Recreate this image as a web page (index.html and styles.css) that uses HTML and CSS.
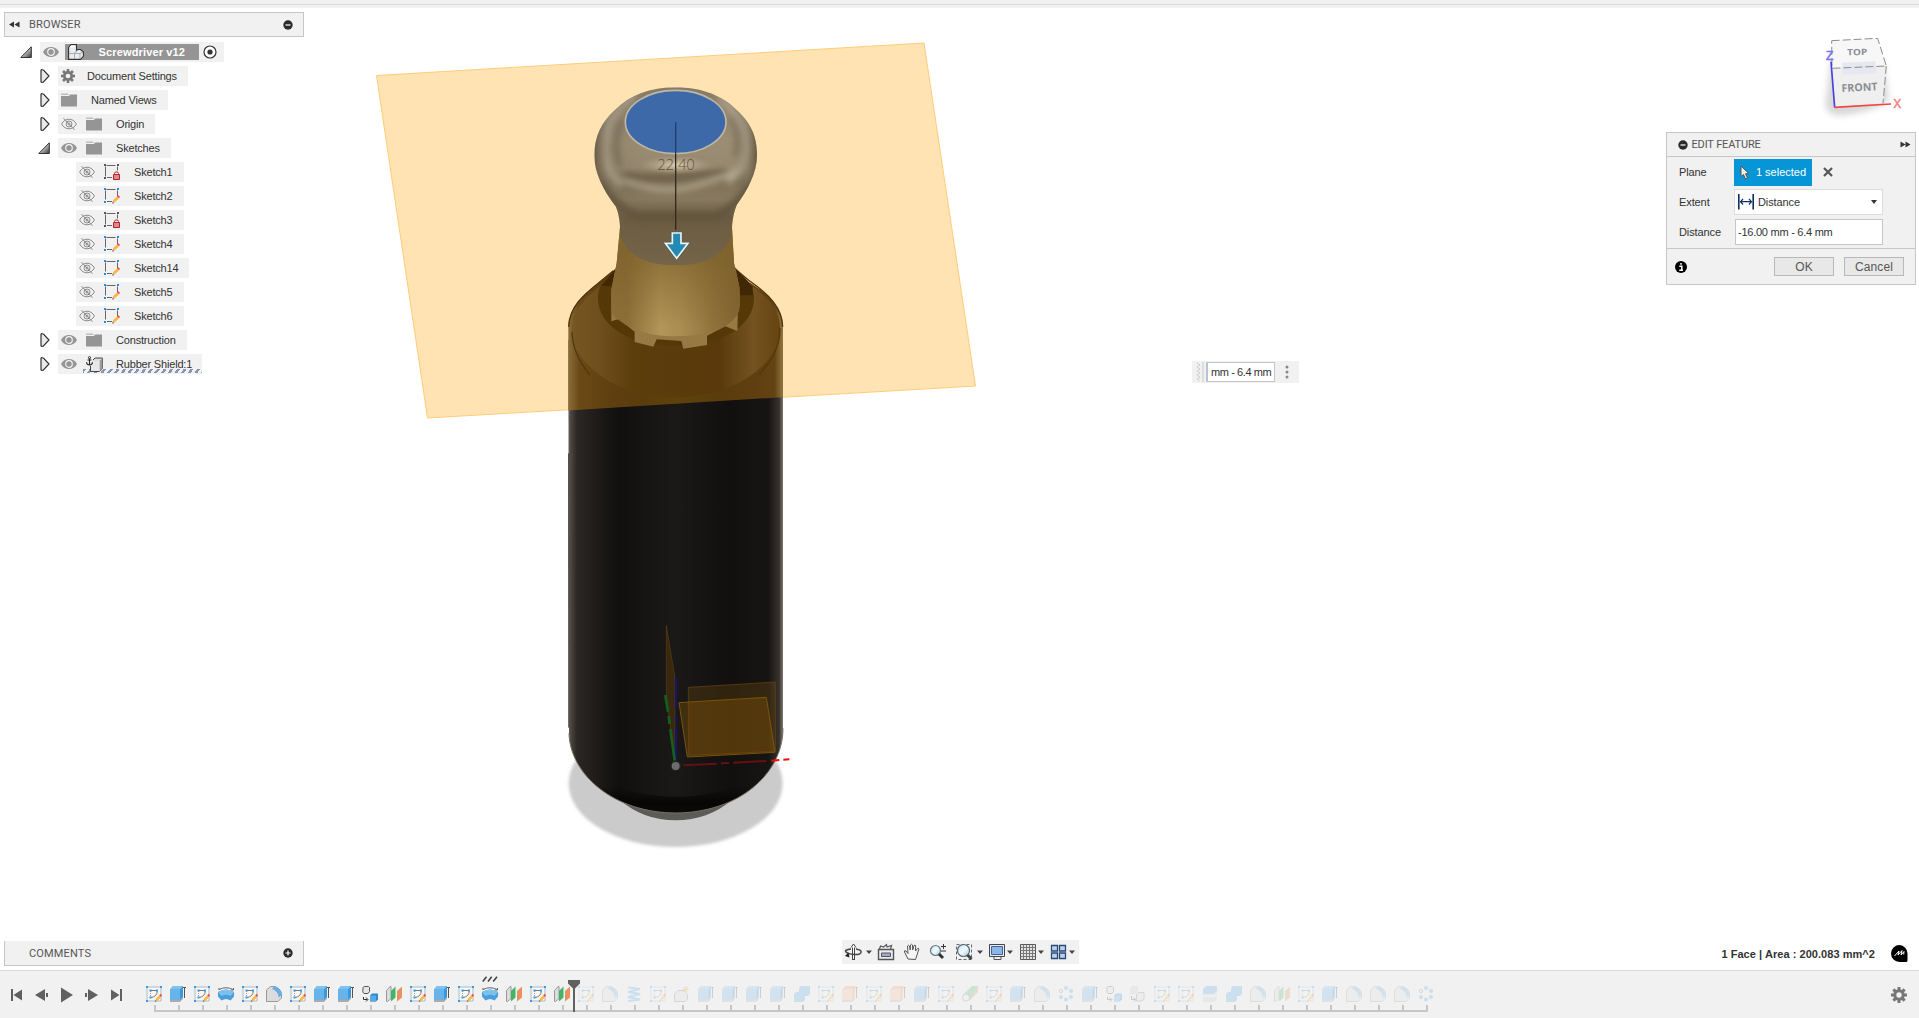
FILE: index.html
```html
<!DOCTYPE html>
<html lang="en">
<head>
<meta charset="utf-8">
<title>Screwdriver v12</title>
<link rel="stylesheet" href="styles.css">
</head>
<body>
<svg class="defs" aria-hidden="true">
  <defs>
    <linearGradient id="tri" x1="0" y1="0" x2="1" y2="1"><stop offset=".3" stop-color="#eee"/><stop offset="1" stop-color="#333"/></linearGradient>
    <linearGradient id="glass" x1="0" y1="0" x2="1" y2="1"><stop offset="0" stop-color="#b9dff0"/><stop offset=".5" stop-color="#f1fafc"/><stop offset="1" stop-color="#9fd0dc"/></linearGradient>
  </defs>
  <symbol id="open" viewBox="0 0 12 12"><path d="M11.3.8v10.700H.8z" fill="url(#tri)" stroke="#333"/></symbol>
  <symbol id="closed" viewBox="0 0 10 14"><path d="M1 1.200C1 .4 3 .6 3.500 1.200L9 7l-5.500 5.800C3 13.400 1 13.600 1 12.800z" fill="#e9e9e9" stroke="#222" stroke-width="1.100"/></symbol>
  <symbol id="eye" viewBox="0 0 16 12"><path d="M0 6C3-.6 13-.6 16 6 13 12.600 3 12.600 0 6z" fill="#959595"/><circle cx="8" cy="6" r="3.300" fill="none" stroke="#f1f1f1" stroke-width="1.200"/></symbol>
  <symbol id="noeye" viewBox="0 0 16 12"><g fill="none" stroke="#8b8b8b"><path d="M.6 6C4-.4 12-.4 15.400 6 12 12.400 4 12.400.6 6z"/><circle cx="8" cy="6" r="3"/><circle cx="8" cy="6" r="1"/><path d="M2.500.2l11 11.600"/></g></symbol>
  <symbol id="folder" viewBox="0 0 16 14"><path d="M0 .5h7l1 1.500H0z" fill="#bdbdbd"/><path d="M0 3h8l1-1.500h7V13.500H0z" fill="#959595"/></symbol>
  <symbol id="gear" viewBox="0 0 16 16"><g fill="#777"><path d="M6.500 0h3v16h-3z"/><path d="M6.500 0h3v16h-3z" transform="rotate(45 8 8)"/><path d="M6.500 0h3v16h-3z" transform="rotate(90 8 8)"/><path d="M6.500 0h3v16h-3z" transform="rotate(135 8 8)"/><circle cx="8" cy="8" r="5.800"/></g><circle cx="8" cy="8" r="2.700" fill="#f1f1f1"/></symbol>
  <symbol id="boxes" viewBox="0 0 16 16"><path d="M.6 3.500L3 .6h5.500v5.900L9.500 5.500h3l2.900 2.500v4.300L12.500 15.400H.6z" fill="#e9edf2" stroke="#333" stroke-width="1.100"/><path d="M.8 9.500h5.500L8.500 6.500M6.500 9.500V15M6.500 9.500H12V15M12 9.500L15 8" fill="none" stroke="#999" stroke-width=".8"/><path d="M3 1.500h4.500L5.800 3.300H1.500z" fill="#fff"/></symbol>
  <symbol id="sk" viewBox="0 0 16 16"><path d="M2.500 1.500h9M1.500 2.500v9M13.500 2.500v6M3 13.500h5" stroke="#666" fill="none"/><path d="M0 0h2v2H0zM13 0h2v2h-2zM0 13h2v2H0z" fill="#1a8fe8"/><path d="M8.700 14.500l.8-2.700 4.200-3.900 1.800 1.900-4 4z" fill="#fbb840"/><path d="M13 8.300l1-1L16 8.800l-1 1.300z" fill="#f33d4e"/><path d="M8 15.800l.8-2.300 1.700 1.500z" fill="#777"/></symbol>
  <symbol id="sklock" viewBox="0 0 16 16"><path d="M2.500 1.500h9M1.500 2.500v10M13.500 2.500v4M3 13.500h5" stroke="#666" fill="none"/><path d="M0 0h2v2H0zM13 0h2v2h-2zM0 13h2v2H0z" fill="#555"/><path d="M10.500 10.500V9.500q0-1.600 2-1.600T14.500 9.500v1" fill="none" stroke="#bd1f25"/><path d="M9.500 10.500h6v5h-6z" fill="#d98a8c" stroke="#bd1f25"/></symbol>
  <symbol id="anchor" viewBox="0 0 20 17"><path d="M7 4l2-2H16.500v10.500l-3 3H4.500V10" fill="#dcdcdc" stroke="#444"/><path d="M13.500 5l3-3v10.500l-3 3z" fill="#999"/><path d="M6.500 5h7v10H5V9z" fill="#e8e8e8"/><path d="M3.500 2.800V9M1.500 4h4M.5 6.200Q.8 9 3.500 9t3-2.800" fill="none" stroke="#222" stroke-width="1.100"/><circle cx="3.500" cy="1.700" r="1.100" fill="none" stroke="#222" stroke-width=".9"/></symbol>
  <symbol id="t-sk" viewBox="0 0 16 16"><path d="M1 1h14v14h-14z" fill="#fff" fill-opacity=".35" stroke="#a9bcc8"/><path d="M4 4.500h7M4.500 11.500Q11 11 11.300 5" fill="none" stroke="#777"/><path d="M4.500 5v6" stroke="#999" stroke-dasharray="1 1"/><path d="M0 0h2v2H0zM14 0h2v2h-2zM0 14h2v2H0zM3.500 3.500h2v2h-2zM10 3.500h2v2h-2zM3.500 10.500h2v2h-2z" fill="#369be6"/><path d="M9 15.400l.8-2.700 4-4 1.900 1.900-4 4z" fill="#fbb840"/><path d="M13.300 8.900l1.200-1.200L16 9.500l-1 1.300z" fill="#f33d4e"/><path d="M8.600 15.900l.8-2 1.500 1.400z" fill="#777"/></symbol>
  <symbol id="t-ex" viewBox="0 0 16 16"><path d="M0 13h10l3-3v2.800L10 16H0z" fill="#aaa"/><path d="M0 3.500L3 0H13v10.500L10 14H0z" fill="#3e98d6"/><path d="M0 3.500h10V14H0z" fill="#67b3ea"/><path d="M0 3.500L3 0H13L10 3.500z" fill="#7fc1f0"/><path d="M14.500 1v11M13 1.500h3" stroke="#555" fill="none"/></symbol>
  <symbol id="t-exo" viewBox="0 0 16 16"><path d="M0 13h10l3-3v2.800L10 16H0z" fill="#aaa"/><path d="M0 3.500L3 0H13v10.500L10 14H0z" fill="#f0a070"/><path d="M0 3.500h10V14H0z" fill="#ffbf94"/><path d="M14.500 1v11M13 1.500h3" stroke="#555" fill="none"/></symbol>
  <symbol id="t-rev" viewBox="0 0 16 16"><path d="M0 6q8-5 16 0v4.500L12.500 14.500q-4.500-3-9 0L0 10.500z" fill="#4a9fdc"/><path d="M0 6q8-5 16 0l-3.500 4q-4.500-3-9 0z" fill="#7cc2f1"/><path d="M1 3.500q7-3.500 14 0M1 4V2M13 4L15.500 4V2" fill="none" stroke="#666"/></symbol>
  <symbol id="t-fil" viewBox="0 0 16 16"><path d="M.5 4L4.500.5H9Q15.500 3 15.500 9v3l-3.500 3.500H.5z" fill="#dcdcdc" stroke="#999"/><path d="M6 3L8 .5Q15.500 1.500 15.800 9L12.500 11.500Q12.300 5 6 3z" fill="#62b0e4"/></symbol>
  <symbol id="t-comp" viewBox="0 0 16 16"><path d="M1 1.500L2.500.5h4l1 1v4l-1.500 2H2L.8 6z" fill="#e5e5e5" stroke="#555"/><path d="M1.500 11v2.500h4M4 11.500l2 2-2 2" fill="none" stroke="#333"/><path d="M8 9.500L10 7.500h6V13.500l-2 2H8z" fill="#2f8acd"/><path d="M8 9.500h6v6H8z" fill="#58a8e2"/></symbol>
  <symbol id="t-cp2" viewBox="0 0 16 16"><path d="M0 2L2 0h6v6L6 8H0z" fill="#ccc"/><path d="M1.500 10v3.500h4M4 11.500l2 2-2 2" fill="none" stroke="#333"/><path d="M6.500 8.500L8.500 6.500H14v6.500l-2 2H6.500z" fill="#ddd" stroke="#777"/></symbol>
  <symbol id="t-spl" viewBox="0 0 16 16"><path d="M.5 4.500L4 .5h1v12L1.500 15.500h-1z" fill="#ddd" stroke="#999"/><path d="M5 5l4.500-4.500V11.500L5 15.500z" fill="#43b56b"/><path d="M11 5l5-4.500V11.500l-5 4z" fill="#e5925f"/></symbol>
  <symbol id="t-coil" viewBox="0 0 16 16"><path d="M2 1.500L14 3 2 6l12 2L2 11l12 2.500L2 15" fill="none" stroke="#4aa3df" stroke-width="2"/></symbol>
  <symbol id="t-star" viewBox="0 0 16 16"><path d="M.5 8L4 4.500h6l3.500 4V13L11 15.500H.5z" fill="#ddd" stroke="#777"/><path d="M11.500 0v7M8 3.500h7M9 1l5 5M14 1L9 6" stroke="#efa72f"/></symbol>
  <symbol id="t-comb" viewBox="0 0 16 16"><path d="M0 8l2-2h3V2l2-2h9v8l-2 2h-3v4l-2 2H0z" fill="#4aa3df"/></symbol>
  <symbol id="t-pipe" viewBox="0 0 16 16"><path d="M7 15.500L16 6V0l-6 5z" fill="#e08a54"/><path d="M1 9L10 0h6L7 14z" fill="#43b56b"/><circle cx="4" cy="11.500" r="3.600" fill="#eee" stroke="#777"/></symbol>
  <symbol id="t-pat" viewBox="0 0 16 16"><g fill="#4aa3df"><circle cx="8" cy="2" r="2"/><circle cx="13" cy="5" r="2"/><circle cx="13" cy="11" r="2"/><circle cx="8" cy="13.500" r="2"/><circle cx="3" cy="11" r="2"/></g><circle cx="3" cy="5" r="1.600" fill="none" stroke="#777"/></symbol>
  <symbol id="t-sb" viewBox="0 0 16 16"><path d="M1 3l3-3h11v5l-3 3H1z" fill="#4aa3df"/><path d="M0 9h12l4-4" fill="none" stroke="#9bd0f2"/><path d="M1 11h11l3-3v5l-3 3H1z" fill="#ccc"/></symbol>
</svg>

<div class="topbar"></div>

<main class="workspace">
  <svg class="model" viewBox="0 8 1919 962">
    <defs>
      <linearGradient id="body" x1="85" x2="730" y1="0" y2="0" gradientUnits="userSpaceOnUse">
        <stop offset="0" stop-color="#6b655c"/><stop offset=".012" stop-color="#4a4540"/><stop offset=".04" stop-color="#2b2724"/><stop offset=".11" stop-color="#211e1b"/><stop offset=".24" stop-color="#100f0d"/><stop offset=".32" stop-color="#141311"/><stop offset=".5" stop-color="#1a1917"/><stop offset=".62" stop-color="#151412"/><stop offset=".75" stop-color="#11100e"/><stop offset=".93" stop-color="#171513"/><stop offset=".98" stop-color="#35312c"/><stop offset="1" stop-color="#857d70"/>
      </linearGradient>
      <linearGradient id="amber" x1="85" x2="730" y1="0" y2="0" gradientUnits="userSpaceOnUse">
        <stop offset="0" stop-color="#8a6d38"/><stop offset=".05" stop-color="#6c4a17"/><stop offset=".2" stop-color="#5f3f10"/><stop offset=".35" stop-color="#5b3c0c"/><stop offset=".5" stop-color="#5f400e"/><stop offset=".72" stop-color="#5b3c0c"/><stop offset=".86" stop-color="#5f3f10"/><stop offset=".96" stop-color="#634314"/><stop offset="1" stop-color="#957944"/>
      </linearGradient>
      <linearGradient id="bevel" x1="85" x2="730" y1="0" y2="0" gradientUnits="userSpaceOnUse">
        <stop offset="0" stop-color="#775925"/><stop offset=".14" stop-color="#6f4f1d"/><stop offset=".3" stop-color="#5c3d0c"/><stop offset=".7" stop-color="#59390b"/><stop offset=".86" stop-color="#745221"/><stop offset="1" stop-color="#64430f"/>
      </linearGradient>
      <linearGradient id="cone" x1="214" x2="600" y1="0" y2="0" gradientUnits="userSpaceOnUse">
        <stop offset="0" stop-color="#8d7039"/><stop offset=".12" stop-color="#8c6f37"/><stop offset=".38" stop-color="#b29558"/><stop offset=".55" stop-color="#a98c50"/><stop offset=".8" stop-color="#8f723a"/><stop offset="1" stop-color="#80622e"/>
      </linearGradient>
      <linearGradient id="coneShade" x1="0" x2="0" y1="600" y2="800" gradientUnits="userSpaceOnUse"><stop offset="0" stop-color="#7d6029" stop-opacity=".65"/><stop offset="1" stop-color="#7d6029" stop-opacity="0"/></linearGradient>
      <linearGradient id="knob" x1="0" x2="0" y1="82" y2="615" gradientUnits="userSpaceOnUse">
        <stop offset="0" stop-color="#867a64"/><stop offset=".3" stop-color="#9c8e75"/><stop offset=".45" stop-color="#978970"/><stop offset=".53" stop-color="#7f725a"/><stop offset=".63" stop-color="#87795f"/><stop offset=".73" stop-color="#6b5c42"/><stop offset="1" stop-color="#746449"/>
      </linearGradient>
      <linearGradient id="knobSide" x1="163" x2="651" y1="0" y2="0" gradientUnits="userSpaceOnUse">
        <stop offset="0" stop-color="#4f442f" stop-opacity=".65"/><stop offset=".08" stop-color="#6d614c" stop-opacity=".2"/><stop offset=".2" stop-color="#6d614c" stop-opacity=".1"/><stop offset=".35" stop-color="#6d614c" stop-opacity="0"/><stop offset=".85" stop-color="#6d614c" stop-opacity="0"/><stop offset=".94" stop-color="#6d614c" stop-opacity=".25"/><stop offset="1" stop-color="#51462f" stop-opacity=".7"/>
      </linearGradient>
      <radialGradient id="hot"><stop offset="0" stop-color="#dccfb4"/><stop offset="1" stop-color="#b0a186" stop-opacity="0"/></radialGradient>
      <linearGradient id="foot" x1="0" x2="0" y1="560" y2="640" gradientUnits="userSpaceOnUse"><stop offset="0" stop-color="#070605" stop-opacity="0"/><stop offset=".6" stop-color="#070605"/><stop offset="1" stop-color="#0b0a08"/></linearGradient>
      <filter id="soft" x="-20%" y="-20%" width="140%" height="140%"><feGaussianBlur stdDeviation="10"/></filter>
      <filter id="edge" x="-5%" y="-5%" width="110%" height="110%"><feGaussianBlur stdDeviation="4"/></filter>
      <clipPath id="knobClip"><path d="M407 82C490 82 550 110 590 150C640 195 651 240 651 285C651 340 622 390 590 435C576 470 577 500 574 530Q540 616 407 616T242 530C240 500 240 470 228 440C190 390 163 340 163 285C163 230 185 185 225 150C270 105 330 82 407 82z"/></clipPath>
      <clipPath id="above"><path d="M0 0H800V1007L0 1057z"/></clipPath>
    </defs>
    <path d="M376.500 75.500L924 43L975.500 386L427.500 418z" fill="#ffe3b3" stroke="#ffcc7a"/>
    <!-- ground shadow, handle and origin planes -->
    <g transform="translate(540 600) scale(.33333)">
      <ellipse cx="407" cy="550" rx="321" ry="191" fill="#cbcbcb" filter="url(#edge)"/>
      <path d="M240 600Q310 661 407 661T575 600z" fill="#5b5b57"/>
      <path d="M85-780H729V385C729 525 590 639 407 639S90 525 87 400z" fill="url(#body)"/>
      <path d="M105 470C160 600 310 637 407 637S655 600 709 470Q600 590 407 590T105 470z" fill="url(#foot)"/>
      <path d="M87 400C90 525 224 639 407 639S729 525 729 385" fill="none" stroke="#777064" stroke-width="3"/>
      <path d="M86 383V-440" stroke="#000" stroke-width="2"/>
      <path d="M379 76L405 235V480L379 290z" fill="#392710" stroke="#5b3f12" stroke-width="2"/>
      <path d="M445 262L707 246V454L445 466z" fill="#7a5310" fill-opacity=".3" stroke="#66450f" stroke-width="2"/>
      <path d="M417 308L679 292L705 457L442 471z" fill="#8a5a05" fill-opacity=".36" stroke="#7a530d" stroke-width="3"/>
      <path d="M408 232V328M408 345V367M408 380V480" stroke="#171470" stroke-width="6"/>
      <path d="M376 285L384 335M386 348L389 372M391 387L404 482" stroke="#14601b" stroke-width="8"/>
      <path d="M430 496L530 491M543 490L567 489M580 488L679 483" stroke="#651012" stroke-width="6"/>
      <path d="M694 482L718 480M730 479L748 478" stroke="#f20b0b" stroke-width="6"/>
      <circle cx="407" cy="498" r="14" fill="#6c6c6c" stroke="#222" stroke-width="4"/>
    </g>
    <!-- shoulder, collar and knob -->
    <g transform="translate(540 60) scale(.33333)">
      <path clip-path="url(#above)" d="M85 800C88 740 130 705 180 665L240 622H580L625 665C690 705 727 745 729 800V1100H85z" fill="url(#amber)"/>
      <path clip-path="url(#above)" d="M96 817C92 750 140 710 190 672H630C680 710 720 750 720 805C720 900 600 1012 407 1012S98 900 96 817z" fill="url(#bevel)"/>
      <path d="M86 800C88 740 130 705 180 665L220 632M592 632L625 660C690 705 727 745 728 800" fill="none" stroke="#4b310c" stroke-width="4"/>
      <path d="M96 817C98 870 120 910 150 945M720 805C720 860 690 910 655 945" fill="none" stroke="#54370e" stroke-width="4"/>
      <path d="M174 715C174 690 180 675 200 650L232 622H585L625 665Q642 690 642 715C642 800 540 858 407 858S174 800 174 715z" fill="#563808"/>
      <path d="M186 678H215L228 624zM590 630L638 680V706H600z" fill="#3f2803"/>
      <path d="M240 520L230 610L214 690V784L236 777L284 815V846L340 860L350 838L424 843L430 866L501 855V827L556 799L592 813L594 745L600 735L598 680L582 610L576 520z" fill="#967943"/>
      <path d="M240 500L230 610L214 690V745Q214 765 236 780Q300 829 400 829Q500 829 556 799Q600 770 600 735L598 680L582 610L576 500z" fill="url(#cone)"/>
      <path d="M240 500L230 610L214 690V745Q214 765 236 780Q300 829 400 829Q500 829 556 799Q600 770 600 735L598 680L582 610L576 500z" fill="url(#coneShade)"/>
      <g clip-path="url(#knobClip)">
        <path d="M150 70H670V630H150z" fill="url(#knob)"/>
        <g filter="url(#soft)" fill="none">
          <path d="M285 105Q195 165 192 270Q200 340 245 375" stroke="#aea38d" stroke-width="20"/>
          <path d="M245 180Q215 250 240 320" stroke="#7d715b" stroke-width="18"/>
          <path d="M535 115Q622 175 624 265Q610 340 560 365" stroke="#aea38d" stroke-width="18"/>
          <path d="M575 170Q602 230 585 290" stroke="#7f735d" stroke-width="16"/>
          <path d="M250 345Q310 358 407 352T560 335" stroke="#695c45" stroke-width="18"/>
          <path d="M250 360Q330 394 407 388T605 325" stroke="#b4a890" stroke-width="13"/>
          <path d="M180 375Q240 450 290 470H530Q600 430 635 375" stroke="#62553d" stroke-width="26"/>
        </g>
        <ellipse cx="407" cy="315" rx="110" ry="28" fill="url(#hot)"/>
        <path d="M150 70H670V630H150z" fill="url(#knobSide)"/>
      </g>
      <ellipse cx="407" cy="186" rx="151" ry="95" fill="#3e69a9" stroke="#bfb7a6" stroke-width="5"/>
      <path d="M407 186V282" stroke="#213d69" stroke-width="4"/>
      <path d="M407 282V510" stroke="#342a19" stroke-width="4"/>
      <text x="352" y="331" class="dim">22</text><text x="402" y="331" class="dim">.</text><text x="414" y="331" class="dim">40</text>
      <path d="M397 519H423V550H444L410 595L376 550H397z" fill="#218bb5" stroke="#3c5a68" stroke-width="8"/>
      <path d="M397 519H423V550H444L410 595L376 550H397z" fill="#218bb5" stroke="#f2f2ea" stroke-width="5"/>
    </g>
  </svg>

  <aside class="left">
    <section>
      <header class="bar">
        <svg class="rew" viewBox="0 0 11 7"><path d="M5 .5v6L0 3.500zM10.500.5v6L5.500 3.500z"/></svg>
        <span>BROWSER</span>
        <svg class="dot" viewBox="0 0 10 10"><circle cx="5" cy="5" r="4.700"/><path d="M2.500 5h5" stroke="#fff" stroke-width="1.200"/></svg>
      </header>
      <ul class="tree">
        <li class="root"><svg class="tw-open"><use href="#open"/></svg><div class="node"><svg class="eye"><use href="#eye"/></svg><b class="active"><svg class="i16"><use href="#boxes"/></svg>Screwdriver v12</b><svg class="radio" viewBox="0 0 14 14"><circle cx="7" cy="7" r="6" fill="#fff" stroke="#333" stroke-width="1.200"/><circle cx="7" cy="7" r="2.600" fill="#333"/></svg></div></li>
        <li class="l1"><svg class="tw"><use href="#closed"/></svg><div class="node"><svg class="gear"><use href="#gear"/></svg><span class="n12">Document Settings</span></div></li>
        <li class="l1"><svg class="tw"><use href="#closed"/></svg><div class="node"><svg class="folder"><use href="#folder"/></svg><span class="n14">Named Views</span></div></li>
        <li class="l1"><svg class="tw"><use href="#closed"/></svg><div class="node"><svg class="eye"><use href="#noeye"/></svg><svg class="folder second"><use href="#folder"/></svg><span class="n14">Origin</span></div></li>
        <li class="l1"><svg class="tw-open"><use href="#open"/></svg><div class="node"><svg class="eye"><use href="#eye"/></svg><svg class="folder second"><use href="#folder"/></svg><span class="n14">Sketches</span></div></li>
        <li class="l2"><div class="node"><svg class="eye"><use href="#noeye"/></svg><svg class="i16 second"><use href="#sklock"/></svg><span class="n14">Sketch1</span></div></li>
        <li class="l2"><div class="node"><svg class="eye"><use href="#noeye"/></svg><svg class="i16 second"><use href="#sk"/></svg><span class="n14">Sketch2</span></div></li>
        <li class="l2"><div class="node"><svg class="eye"><use href="#noeye"/></svg><svg class="i16 second"><use href="#sklock"/></svg><span class="n14">Sketch3</span></div></li>
        <li class="l2"><div class="node"><svg class="eye"><use href="#noeye"/></svg><svg class="i16 second"><use href="#sk"/></svg><span class="n14">Sketch4</span></div></li>
        <li class="l2"><div class="node"><svg class="eye"><use href="#noeye"/></svg><svg class="i16 second"><use href="#sk"/></svg><span class="n14">Sketch14</span></div></li>
        <li class="l2"><div class="node"><svg class="eye"><use href="#noeye"/></svg><svg class="i16 second"><use href="#sk"/></svg><span class="n14">Sketch5</span></div></li>
        <li class="l2"><div class="node"><svg class="eye"><use href="#noeye"/></svg><svg class="i16 second"><use href="#sk"/></svg><span class="n14">Sketch6</span></div></li>
        <li class="l1"><svg class="tw"><use href="#closed"/></svg><div class="node"><svg class="eye"><use href="#eye"/></svg><svg class="folder second"><use href="#folder"/></svg><span class="n14">Construction</span></div></li>
        <li class="l1"><svg class="tw"><use href="#closed"/></svg><div class="node hatched"><svg class="eye"><use href="#eye"/></svg><svg class="anchor second"><use href="#anchor"/></svg><span class="n14">Rubber Shield:1</span></div></li>
      </ul>
    </section>
    <header class="bar comments">
      <span>COMMENTS</span>
      <svg class="dot" viewBox="0 0 10 10"><circle cx="5" cy="5" r="4.700"/><path d="M2.500 5h5M5 2.500v5" stroke="#fff" stroke-width="1.200"/></svg>
    </header>
  </aside>

  <nav class="navbar">
    <svg viewBox="0 0 237 24">
      <g fill="#444"><path d="M24 10.500h6l-3 3.500zM135 10.500h6l-3 3.500zM165 10.500h6l-3 3.500zM196 10.500h6l-3 3.500zM227 10.500h6l-3 3.500z"/></g>
      <path d="M11.500 20V5" stroke="#444" stroke-width="3"/><path d="M11.500 19V6" stroke="#fff"/><path d="M9 7.500l2.500-3.500L14 7.500" fill="#fff" stroke="#444"/><path d="M9 9Q2 10 4 12T12 14.500t7-2T14 9" fill="none" stroke="#444" stroke-width="1.500"/><path d="M3 16l3.500-3.500 1 5z" fill="#222"/>
      <path d="M36.500 9.500h15v10h-15z" fill="#e8ebef" stroke="#555" stroke-width="1.400"/><path d="M39.500 13h9v3.500h-9z" fill="#aab" stroke="#556"/><path d="M37.500 9l1-3 3 1 3-2.500.5 2.500 4.500-1.500-1 3.500" fill="none" stroke="#555" stroke-width="1.200"/>
      <path d="M66 19L62.500 12Q62 10 64 11l2 2.500-.5-7.500q1-1.500 2 0l.7 4 .3-5q1-1.500 2 0l.2 5 1.300-4.500q1.300-1 1.700.5L73.500 11l2-2.500q1.500-.7 1.300.8L75 15l-1.500 4.500z" fill="#f5f5f5" stroke="#555"/>
      <circle cx="93.500" cy="10.500" r="5" fill="url(#glass)" stroke="#678" stroke-width="1.200"/><path d="M97 14l4 4" stroke="#333" stroke-width="3"/><path d="M99 6.500h5M101.500 4v5M99 11h5" stroke="#333"/>
      <path d="M114.500 4.500h15v15h-15z" fill="none" stroke="#666" stroke-dasharray="3 2"/><circle cx="121.500" cy="10.500" r="6" fill="url(#glass)" stroke="#567" stroke-width="1.200"/><path d="M125.500 15l4 4" stroke="#444" stroke-width="3"/>
      <path d="M147.500 4.500h15v12h-15z" fill="#e8ebef" stroke="#444"/><path d="M149.500 6.500h11v8h-11z" fill="#8fb4e8" stroke="#3a64a8"/><path d="M152 17v2.500h7V17" fill="#eee" stroke="#555"/>
      <path d="M178.500 4.500h15v15h-15z" fill="#e5e5e5" stroke="#555"/><path d="M181.500 4.500v15M184.500 4.500v15M187.500 4.500v15M190.500 4.500v15M178.500 7.500h15M178.500 10.500h15M178.500 13.500h15M178.500 16.500h15" stroke="#777"/>
      <path d="M209.500 5.500h6v5.500h-6zM217.500 5.500h6v5.500h-6zM209.500 13h6v5.500h-6zM217.500 13h6v5.500h-6z" fill="#b9d2f2" stroke="#2c4a75" stroke-width="1.300"/>
    </svg>
  </nav>

  <aside class="right">
    <svg class="cube" viewBox="500 0 299 330">
      <path d="M525 255Q530 300 620 280T715 235L700 130H540z" fill="#999" opacity=".38" filter="url(#soft)"/>
      <path d="M544 62L682 55L708 138L545 145z" fill="#f7f7f7"/><path d="M545 145L708 138L698 250L553 262z" fill="#efefef"/>
      <path d="M576 128L675 124L678 160L577 165z" fill="#e6e8f1"/>
      <path d="M544 62L682 55L708 138L545 145zM708 138L698 250" fill="none" stroke="#8d8d8d" stroke-width="3" stroke-dasharray="24 9"/>
      <path d="M542 125L553 262" stroke="#4545dd" stroke-width="5"/><path d="M553 262L722 252" stroke="#ef4545" stroke-width="5"/>
      <text x="591" y="106" class="face" transform="rotate(-1 591 106)" font-size="26" textLength="60" lengthAdjust="spacingAndGlyphs">TOP</text>
      <text x="574" y="216" class="face" transform="rotate(-3 574 216)" font-size="32" textLength="108" lengthAdjust="spacingAndGlyphs">FRONT</text>
      <text x="527" y="119" class="axis" fill="#7272ee" stroke="#7272ee">Z</text>
      <text x="729" y="264" class="axis" fill="#f58484" stroke="#f58484">X</text>
    </svg>
    <section class="panel">
      <header><svg class="dot" viewBox="0 0 10 10"><circle cx="5" cy="5" r="4.700"/><path d="M2.500 5h5" stroke="#fff" stroke-width="1.200"/></svg><span>EDIT FEATURE</span><svg class="rew" viewBox="0 0 11 7"><path d="M.5.5v6l5-3zM5.500.5v6l5-3z"/></svg></header>
      <div class="fields">
        <label>Plane</label><div class="planes"><button class="selected"><svg viewBox="0 0 10 15"><path d="M1 1v10.500l2.500-2 2 4.500 2-1-2-4.300H9z" fill="#eee" stroke="#555"/></svg>1 selected</button><svg class="clear" viewBox="0 0 10 10"><path d="M1 1l8 8M9 1L1 9" stroke="#555" stroke-width="2.200"/></svg></div>
        <label>Extent</label><div class="select"><svg class="ext" viewBox="0 0 16 16"><path d="M.8 0v15.500M15.200 0v15.500" stroke="#12305c" stroke-width="1.600"/><path d="M2.500 7.700h11M5 5L2.500 7.700 5 10.500M11 5l2.500 2.700L11 10.500" fill="none" stroke="#12305c" stroke-width="1.200"/></svg><span>Distance</span><svg class="caret" viewBox="0 0 6 4"><path d="M0 0h6L3 4z"/></svg></div>
        <label>Distance</label><div class="input">-16.00 mm - 6.4 mm</div>
      </div>
      <footer><svg class="info" viewBox="0 0 12 12"><circle cx="6" cy="6" r="6"/><path d="M4.300 5.200h2.500V9M4.300 9.300h3.700M6 2v1.800" stroke="#fff" stroke-width="1.500" fill="none"/></svg><button>OK</button><button>Cancel</button></footer>
    </section>
    <div class="status"><b>1 Face | Area : 200.083 mm^2</b><svg viewBox="0 0 17 17"><path d="M8.500 0A8.500 8.500 0 1 0 8.500 17H15a1.500 1.500 0 0 0 1.500-1.500V8.500A8.500 8.500 0 0 0 8.500 0z"/><path d="M3.500 11L8 6 7 10l4-4.500L10 10l3-3.500-.3 3" fill="none" stroke="#fff"/></svg></div>
  </aside>

  <div class="floating"><svg viewBox="0 0 14 22"><path d="M5 2l3 2-3 2 3 2-3 2 3 2-3 2 3 2-3 2 3 2" fill="none" stroke="#bbb" stroke-dasharray="1.500 1"/><path d="M11 1v20" stroke="#ddd" stroke-width="2"/></svg><div class="val"><span>mm - 6.4 mm</span></div><svg class="kebab" viewBox="0 0 4 14"><circle cx="2" cy="2" r="1.500"/><circle cx="2" cy="7" r="1.500"/><circle cx="2" cy="12" r="1.500"/></svg></div>
</main>

<footer class="timeline">
  <svg class="play" viewBox="0 0 126 16"><path d="M11 2h2v12h-2zM22 2.500v11L13.500 8zM45 2v12L35 8zM46 6h2v4h-2zM61 .5v15L73 8zM85 6h2v4h-2zM88 2v12l10-6zM111 2.500v11l8.500-5.500zM120 2h2v12h-2z"/></svg>
  <div class="track">
    <i><svg><use href="#t-sk"/></svg></i><i><svg><use href="#t-ex"/></svg></i><i><svg><use href="#t-sk"/></svg></i><i><svg><use href="#t-rev"/></svg></i><i><svg><use href="#t-sk"/></svg></i><i><svg><use href="#t-fil"/></svg></i><i><svg><use href="#t-sk"/></svg></i><i><svg><use href="#t-ex"/></svg></i><i><svg><use href="#t-ex"/></svg></i><i><svg><use href="#t-comp"/></svg></i><i><svg><use href="#t-spl"/></svg></i><i><svg><use href="#t-sk"/></svg></i><i><svg><use href="#t-ex"/></svg></i><i><svg><use href="#t-sk"/></svg></i><i class="warn"><svg><use href="#t-rev"/></svg><svg class="slashes" viewBox="0 0 16 6"><path d="M.8 5.500L4.500.8M6 5.500L9.700.8M11.200 5.500L15 .8" stroke="#444" stroke-width="1.600"/></svg></i><i><svg><use href="#t-spl"/></svg></i><i><svg><use href="#t-sk"/></svg></i><i class="now"><svg><use href="#t-spl"/></svg><svg class="marker" viewBox="0 0 12 32"><path d="M0 0h12v3.500L7 8.500V32H5V8.500L0 3.500z"/></svg></i>
    <i class="off"><svg><use href="#t-sk"/></svg></i><i class="off"><svg><use href="#t-fil"/></svg></i><i class="off"><svg><use href="#t-coil"/></svg></i><i class="off"><svg><use href="#t-sk"/></svg></i><i class="off"><svg><use href="#t-star"/></svg></i><i class="off"><svg><use href="#t-ex"/></svg></i><i class="off"><svg><use href="#t-ex"/></svg></i><i class="off"><svg><use href="#t-ex"/></svg></i><i class="off"><svg><use href="#t-ex"/></svg></i><i class="off"><svg><use href="#t-comb"/></svg></i><i class="off"><svg><use href="#t-sk"/></svg></i><i class="off"><svg><use href="#t-exo"/></svg></i><i class="off"><svg><use href="#t-sk"/></svg></i><i class="off"><svg><use href="#t-exo"/></svg></i><i class="off"><svg><use href="#t-ex"/></svg></i><i class="off"><svg><use href="#t-sk"/></svg></i><i class="off"><svg><use href="#t-pipe"/></svg></i><i class="off"><svg><use href="#t-sk"/></svg></i>
    <i class="off"><svg><use href="#t-ex"/></svg></i><i class="off"><svg><use href="#t-fil"/></svg></i><i class="off"><svg><use href="#t-pat"/></svg></i><i class="off"><svg><use href="#t-ex"/></svg></i><i class="off"><svg><use href="#t-comp"/></svg></i><i class="off"><svg><use href="#t-cp2"/></svg></i><i class="off"><svg><use href="#t-sk"/></svg></i><i class="off"><svg><use href="#t-sk"/></svg></i><i class="off"><svg><use href="#t-sb"/></svg></i><i class="off"><svg><use href="#t-comb"/></svg></i><i class="off"><svg><use href="#t-fil"/></svg></i><i class="off"><svg><use href="#t-spl"/></svg></i><i class="off"><svg><use href="#t-sk"/></svg></i><i class="off"><svg><use href="#t-ex"/></svg></i><i class="off"><svg><use href="#t-fil"/></svg></i><i class="off"><svg><use href="#t-fil"/></svg></i><i class="off"><svg><use href="#t-fil"/></svg></i><i class="off"><svg><use href="#t-pat"/></svg></i>
  </div>
  <svg class="settings"><use href="#gear"/></svg>
</footer>
</body>
</html>
```
FILE: styles.css
```css
* { box-sizing: border-box; }
body { margin: 0; width: 1919px; height: 1018px; overflow: hidden; display: flex; flex-direction: column; background: #fff; color: #333; font: 11px "Liberation Sans", Arial, sans-serif; }
svg { display: block; flex: none; }
.defs { position: absolute; width: 0; height: 0; }
button { font: inherit; padding: 0; border-radius: 0; }
.topbar { flex: none; height: 8px; background: linear-gradient(#f1f1f1 4px, #dcdcdc 4px, #dcdcdc 5px, #f1f1f1 5px); }

.workspace { position: relative; height: 962px; flex: none; display: flex; justify-content: space-between; }
.model { position: absolute; left: 0; top: 0; width: 1919px; height: 962px; }
.dim { font: 300 45px "Open Sans", sans-serif; fill: #5f543e; letter-spacing: -1px; }
.left, .right, .navbar { position: relative; }
.left { width: 300px; margin: 4px 0 4px 4px; display: flex; flex-direction: column; justify-content: space-between; }
.bar { height: 25px; border: 1px solid #c6c6c6; background: #f1f1f1; display: flex; align-items: center; padding: 0 10.500px 0 4px; color: #555; font-family: Roboto, sans-serif; }
.bar span { flex: 1; letter-spacing: .15px; }
.bar .rew { margin-right: 9px; }
.comments { border-top: 0; padding-left: 24px; }
.rew { width: 11px; height: 7px; fill: #333; }
.dot { width: 10px; height: 10px; fill: #2b2b2b; }

.tree { list-style: none; margin: 5px 0 0; padding: 0; letter-spacing: -.18px; }
.tree li { display: flex; align-items: center; height: 20px; margin-bottom: 4px; }
.root { padding-left: 16px; }
.l1 { padding-left: 36px; }
.l2 { padding-left: 72px; }
.tw-open { width: 12px; height: 12px; margin-right: 8px; }
.l1 .tw-open { margin: 0 8px 0 -2px; }
.tw { width: 10px; height: 14px; margin-right: 8px; }
.node { display: flex; align-items: center; height: 20px; background: #f1f1f1; padding: 0 11px 0 3px; white-space: nowrap; }
.root .node { width: 184px; }
.eye { width: 16px; height: 12px; }
.folder { width: 16px; height: 14px; }
.i16 { width: 16px; height: 16px; }
.gear { width: 14px; height: 14px; }
.second { margin-left: 9px; }
.anchor { width: 20px; height: 17px; margin-right: -4px; }
.n12 { margin-left: 12px; }
.n14 { margin-left: 14px; }
.active { flex: none; display: flex; align-items: center; width: 134px; height: 16px; margin-left: 6px; padding-left: 3px; background: #959595; color: #fff; letter-spacing: .15px; }
.active svg { margin-right: 14.500px; }
.radio { width: 14px; height: 14px; margin-left: 3.500px; }
.node.hatched { padding-right: 10px; background: repeating-linear-gradient(125deg, #8594b4 0 2.500px, transparent 2.500px 5.500px) 25px 15px / 100% 4px no-repeat #f1f1f1; }

.navbar { position: absolute; left: 842px; bottom: 6px; width: 237px; height: 24px; background: #f1f1f1; }
.right { width: 253px; display: flex; flex-direction: column; padding: 12px 3px 0 0; }
.cube { width: 99.67px; height: 110px; margin: 0 0 2px 151px; }
.face { font-family: "Open Sans", sans-serif; font-weight: 700; fill: #8b8e94; }
.axis { font: 36px "Liberation Sans", sans-serif; stroke-width: 1.500px; }

.panel { height: 153px; border: 1px solid #c6c6c6; background: #f1f1f1; letter-spacing: -.1px; }
.panel header { height: 24px; display: flex; align-items: center; padding: 0 4px 0 11px; border-bottom: 1px solid #c6c6c6; font-family: Roboto, sans-serif; color: #555; letter-spacing: -.15px; }
.panel header span { flex: 1; margin-left: 3.500px; }
.fields { display: grid; grid-template-columns: 55px 149px; grid-auto-rows: 30px; align-items: center; padding-left: 12px; height: 91px; }
.fields label { padding-bottom: 1px; }
.planes { display: flex; align-items: center; }
.selected { width: 78px; height: 27px; background: #0696d7; color: #fff; border: 0; display: flex; align-items: center; justify-content: center; gap: 6px; }
.selected svg { width: 10px; height: 15px; }
.clear { width: 10px; height: 10px; margin-left: 11px; }
.select, .input { height: 26px; background: #fff; display: flex; align-items: center; padding: 0 5px 0 3px; border: 1px solid #c6c6c6; }
.select { border-color: #ddd; }
.input { letter-spacing: -.25px; margin-left: 1px; padding-left: 2px; }
.select span { flex: 1; margin-left: 4px; }
.ext { width: 16px; height: 16px; }
.caret { width: 6px; height: 4px; fill: #333; }
.panel footer { height: 36px; border-top: 1px solid #c6c6c6; display: flex; align-items: center; gap: 10px; padding: 0 11px 0 8px; }
.panel footer button { width: 60px; height: 19px; border: 1px solid #b8b8b8; background: #e8e8e8; color: #555; font-size: 12px; letter-spacing: .1px; }
.info { width: 12px; height: 12px; margin-right: auto; }
.status { margin: auto 8px 8px 0; display: flex; align-items: center; justify-content: flex-end; gap: 16px; }
.status b { letter-spacing: .05px; white-space: nowrap; }
.status svg { width: 17px; height: 17px; }

.floating { position: absolute; left: 1192px; top: 353px; width: 107px; height: 22px; background: #f1f1f1; display: flex; align-items: center; }
.floating > svg:first-child { width: 14px; height: 22px; }
.val { width: 69px; height: 20px; background: #fff; border: 1px solid #c6c6c6; border-left: 2px solid #b7c4d6; line-height: 18px; padding-left: 3px; white-space: nowrap; letter-spacing: -.4px; }
.floating .kebab { width: 4px; height: 14px; margin-left: 10px; fill: #888; }

.timeline { flex: none; height: 48px; background: #f1f1f1; border-top: 1px solid #d9d9d9; display: flex; align-items: flex-start; }
.play { width: 126px; height: 16px; margin-top: 16px; fill: #606060; }
.track { display: flex; padding: 15px 0 0 16px; }
.track i { position: relative; width: 24px; height: 26px; padding-left: 4px; background: linear-gradient(#c6c6c6, #c6c6c6) 12px 19px / 2px 5px no-repeat, linear-gradient(#c6c6c6, #c6c6c6) 0 24px / 24px 2px no-repeat; }
.track i:first-child { background-position: 12px 19px, 12px 24px; }
.track i:last-child { background-size: 2px 5px, 14px 2px; }
.track svg { width: 16px; height: 16px; }
.off > svg { opacity: .22; }
.track .slashes { position: absolute; left: 4px; top: -10px; height: 6px; }
.track .marker { position: absolute; left: 18px; top: -6px; width: 12px; height: 32px; fill: #606060; z-index: 1; }
.settings { width: 16px; height: 16px; margin: 16px 12px 0 auto; }
```
